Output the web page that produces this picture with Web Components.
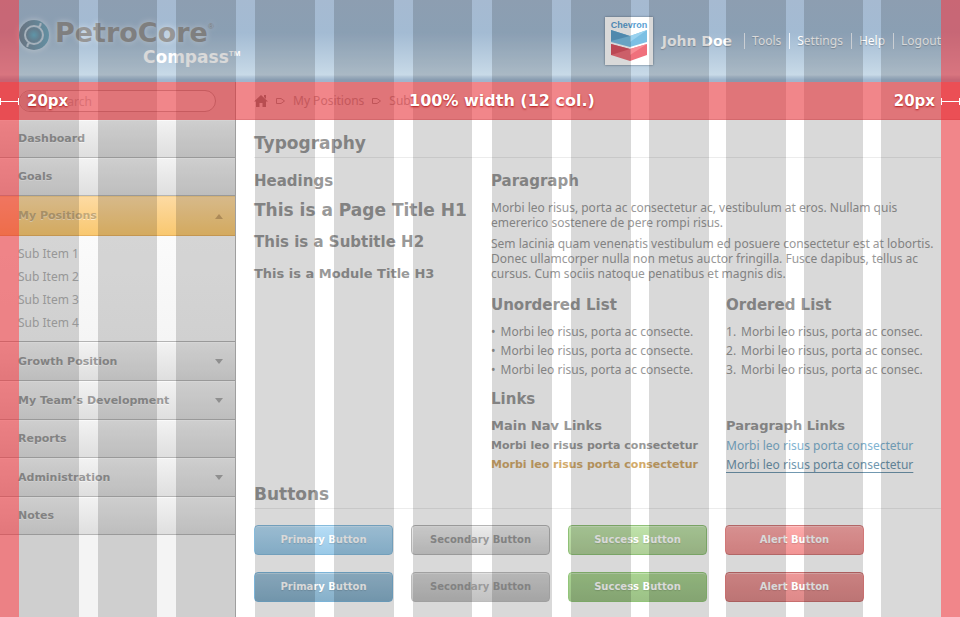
<!DOCTYPE html>
<html lang="en">
<head>
<meta charset="utf-8">
<title>PetroCore Compass – Style Guide</title>
<style>
html,body{margin:0;height:100%}
body{background:#fff;color:#999;font:12px/15px "Noto Sans","Open Sans",sans-serif;--display:"DejaVu Sans",Verdana,sans-serif}
</style>
</head>
<body>
<style-guide-page></style-guide-page>
<script>
function define(name, html, setup){
  const t=document.createElement('template');
  t.innerHTML=html;
  customElements.define(name, class extends HTMLElement{
    connectedCallback(){
      if(this.shadowRoot) return;
      this.attachShadow({mode:'open'}).append(t.content.cloneNode(true));
      if(setup) setup(this, this.shadowRoot);
    }
  });
}

define('brand-logo', `
<style>
:host{display:flex;align-items:center;color:#969696;padding-top:4px}
svg{width:30px;height:30px;margin:0 6px 16px 0;flex:none;filter:drop-shadow(0 0 3px #fff9)}
.words{display:flex;flex-direction:column;font-family:var(--display);font-weight:bold}
.name{font-size:27px;line-height:28px;text-shadow:0 0 6px #fff9;display:flex}
.sub{font-size:17px;line-height:20px;color:#fff;margin-left:88px;display:flex}
small{font:bold 8px/8px "Liberation Sans",sans-serif}
.name small{font-weight:normal;margin-top:4px}
.sub small{margin-top:3px}
</style>
<svg viewBox="0 0 30 30" aria-hidden="true">
 <defs><linearGradient id="g" x1="0" x2="1"><stop offset="0" stop-color="#7b8797"/><stop offset="1" stop-color="#75a9bf"/></linearGradient>
 <radialGradient id="c"><stop offset="0" stop-color="#6fb0c6"/><stop offset="1" stop-color="#7890a2"/></radialGradient></defs>
 <circle cx="15" cy="15" r="15" fill="url(#g)"/>
 <circle cx="15" cy="15" r="9" fill="none" stroke="#c3d0dc" stroke-width="2"/>
 <path d="M19.500 7Q22 6 21.500 3M10.500 23Q8 24 8.500 27" fill="none" stroke="#c3d0dc" stroke-width="2"/>
 <circle cx="15" cy="15" r="7" fill="url(#c)"/>
</svg>
<div class="words"><span class="name">PetroCore<small>®</small></span><span class="sub">Compass<small>TM</small></span></div>`);

define('company-badge', `
<style>
:host{display:block;width:48px;height:48px;box-sizing:border-box;background:#fff;box-shadow:0 0 2px #5a6a7a}
svg{display:block;width:48px;height:48px}
text{font:bold 9px "Liberation Sans",sans-serif;fill:#5b9fd2}
</style>
<svg viewBox="0 0 48 48" role="img" aria-label="Chevron">
 <text x="24" y="11" text-anchor="middle">Chevron</text>
 <path d="M6 13L25 19L42 13V25L25 30L6 25Z" fill="#7cc0e4"/>
 <path d="M6 13L25 19L6 24Z" fill="#5fa2cc"/><path d="M25 19L42 13L25 25Z" fill="#9ad2ef"/>
 <path d="M6 27L25 32L42 27V38L25 44L6 38Z" fill="#f0707c"/>
 <path d="M6 27L25 32L6 38Z" fill="#dc5563"/><path d="M25 32L42 27L25 38Z" fill="#f88c94"/>
</svg>`);

define('app-header', `
<style>
:host{display:flex;align-items:center;justify-content:space-between;height:82px;padding:0 19px;
 background:linear-gradient(#a6bad1,#a3bbd3 40%,#c8dae8 75px,#bccfdf 76px,#9fb6cf 80px,#a0b6cd)}
nav{display:flex;align-items:center;color:#fff}
strong{font:bold 14px/16px var(--display);margin:0 12px 0 9px;text-shadow:0 1px 1px #0003}
a{color:inherit;text-decoration:none;padding:0 8px 0 7px;border-left:1px solid #eef3f8;line-height:16px;text-shadow:0 1px 1px #0003}
a:last-child{padding-right:0}
</style>
<brand-logo></brand-logo>
<nav aria-label="Account"><company-badge></company-badge><strong>John Doe</strong>
<a href="#tools">Tools</a><a href="#settings">Settings</a><a href="#help">Help</a><a href="#logout">Logout</a></nav>`);

define('search-box', `
<style>
:host{display:flex;align-items:center;height:38px;padding:0 19px;box-sizing:border-box}
label{display:flex;align-items:center;flex:1;min-width:0;height:22px;border:1px solid #bbb;border-radius:12px;background:#fff;box-sizing:border-box;overflow:hidden}
svg{width:26px;height:20px;flex:none;background:#ddd}
input{flex:1;width:0;min-width:0;border:0;background:none;outline:0;font:inherit;color:#bbb;padding:0 8px;margin:0}
input::placeholder{color:#ccc;opacity:1}
</style>
<label><svg viewBox="0 0 26 20" aria-hidden="true"><circle cx="13" cy="9" r="4" fill="none" stroke="#ddd" stroke-width="2"/></svg><input type="search" placeholder="Search" aria-label="Search"></label>`);

define('nav-item', `
<style>
:host{display:block}
a{display:flex;align-items:center;justify-content:space-between;height:38px;box-sizing:border-box;padding:0 12px 0 18px;
 font:bold 11px/16px var(--display);color:#999;text-decoration:none;text-shadow:0 1px 0 #fff8;
 background:linear-gradient(#f2f2f2,#dfdfdf);border-top:1px solid #fafafa;border-bottom:1px solid #b4b4b4}
:host([menu]) a{height:39px}
:host([open]) a{height:40px;color:#c4a878;background:linear-gradient(#fddaa2,#f9c870);border-color:#f5cf8c #e6b160 #e6b160}
svg{display:none;width:8px;height:5px;fill:#a8a8a8}
:host([menu]) svg,:host([open]) svg{display:block}
:host([open]) svg{transform:rotate(180deg);fill:#cba368}
</style>
<a href="#"><slot></slot><svg viewBox="0 0 8 5" aria-hidden="true"><path d="M0 0H8L4 5Z"/></svg></a>`);

define('sub-nav', `
<style>
:host{display:block;padding:6px 18px 7px;background:linear-gradient(#fbfbfb,#f5f5f5);border-bottom:1px solid #b4b4b4}
::slotted(a){display:block;line-height:23px;color:#b2b2b2;text-decoration:none}
</style><slot></slot>`);

define('side-nav', `
<style>
:host{display:block;flex:0 0 236px;min-width:0;box-sizing:border-box;border-right:1px solid #bbb;background:#f4f4f4}
</style>
<search-box></search-box>
<nav aria-label="Main">
<nav-item>Dashboard</nav-item><nav-item>Goals</nav-item><nav-item open>My Positions</nav-item>
<sub-nav><a href="#1">Sub Item 1</a><a href="#2">Sub Item 2</a><a href="#3">Sub Item 3</a><a href="#4">Sub Item 4</a></sub-nav>
<nav-item menu>Growth Position</nav-item><nav-item menu>My Team’s Development</nav-item><nav-item>Reports</nav-item><nav-item menu>Administration</nav-item><nav-item>Notes</nav-item>
</nav>`);

define('bread-crumbs', `
<style>
:host{display:flex;align-items:center;gap:8px;height:38px;padding-left:18px;box-sizing:border-box;background:#fff;border-bottom:1px solid #ddd}
a,span{color:#b4b4b4;text-decoration:none}
.home{width:14px;height:12px;display:block;fill:#999}
.sep{width:9px;height:6px;fill:none;stroke:#aaa}
</style>
<a href="#home" aria-label="Home"><svg class="home" viewBox="0 0 14 12"><path d="M7 0L14 6.500H12V12H8.500V8H5.500V12H2V6.500H0ZM10 0H12V4L10 2Z"/></svg></a>
<svg class="sep" viewBox="0 0 9 6"><path d="M.5.5H5L8.500 3L5 5.500H.5Z"/></svg>
<a href="#positions">My Positions</a>
<svg class="sep" viewBox="0 0 9 6"><path d="M.5.5H5L8.500 3L5 5.500H.5Z"/></svg>
<span>Sub</span>`);

define('section-title', `
<style>
:host{display:block;border-bottom:1px solid #ececec;padding-bottom:4px}
h1{margin:0;font:bold 17px/20px var(--display)}
</style><h1><slot></slot></h1>`);

define('ui-button', `
<style>
:host{display:block;width:139px}
button{display:block;width:100%;height:30px;padding:0;border:1px solid var(--b);border-radius:4px;color:#fff;
 font:bold 10px/16px var(--display);background:linear-gradient(var(--t),var(--e));box-shadow:inset 0 1px 0 #fff5;text-shadow:0 1px 1px #0002}
:host([kind=primary]){--t:#b6ddf6;--e:#9ac9e7;--b:#86bbdc}
:host([kind=primary][active]){--t:#9fc3da;--e:#86b0ca;--b:#7cb4d8}
:host([kind=secondary]){--t:#ebebeb;--e:#d3d3d3;--b:#b4b4b4}
:host([kind=secondary][active]){--t:#d6d6d6;--e:#c2c2c2;--b:#bcbcbc}
:host([kind=secondary]) button{color:#999;text-shadow:none}
:host([kind=success]){--t:#bfe3aa;--e:#b0cf99;--b:#8fc077}
:host([kind=success][active]){--t:#a9d391;--e:#9cc187;--b:#92c57a}
:host([kind=alert]){--t:#fdaaaa;--e:#f29595;--b:#d27878}
:host([kind=alert][active]){--t:#ee9898;--e:#de8989;--b:#c86f6f}
</style><button type="button"><slot></slot></button>`);

define('type-specimens', `
<style>
:host{display:grid;grid-template-columns:217fr 450fr;column-gap:20px;padding:13px 0 10px}
h1,h2,h3,p,ul,ol{margin:0;padding:0}
h1,h2,h3{font-family:var(--display);font-weight:bold;line-height:20px}
h1{font-size:17px}h2{font-size:15px}h3{font-size:13px}
.heads{display:flex;flex-direction:column;gap:12px}
.label{margin-bottom:9px}
.heads .label{margin-bottom:-3px}
p{margin-bottom:6px}
.pair{display:grid;grid-template-columns:1fr 1fr;column-gap:20px}
.lists{padding:8px 0 10px}
.lists h2,.links{margin-bottom:7px}
ul,ol{list-style:none;counter-reset:n}
li{display:flex;gap:5px;line-height:19px;counter-increment:n}
ul li::before{content:"•"}
ol li::before{content:counter(n) "."}
.pair a{display:block;line-height:19px;text-decoration:none}
.main{font:bold 11px/19px var(--display);color:#999}
.main.hot{color:#d2aa6c}
.para{color:#82b4d2}
.pair .para.hot{color:#7198b0;text-decoration:underline;text-underline-offset:3px}
</style>
<div class="heads"><h2 class="label">Headings</h2><h1>This is a Page Title H1</h1><h2>This is a Subtitle H2</h2><h3>This is a Module Title H3</h3></div>
<div><h2 class="label">Paragraph</h2>
<p>Morbi leo risus, porta ac consectetur ac, vestibulum at eros. Nullam quis emererico sostenere de pere rompi risus.</p>
<p>Sem lacinia quam venenatis vestibulum ed posuere consectetur est at lobortis. Donec ullamcorper nulla non metus auctor fringilla. Fusce dapibus, tellus ac cursus. Cum sociis natoque penatibus et magnis dis.</p>
<div class="pair lists"><div><h2>Unordered List</h2><ul><li>Morbi leo risus, porta ac consecte.</li><li>Morbi leo risus, porta ac consecte.</li><li>Morbi leo risus, porta ac consecte.</li></ul></div>
<div><h2>Ordered List</h2><ol><li>Morbi leo risus, porta ac consec.</li><li>Morbi leo risus, porta ac consec.</li><li>Morbi leo risus, porta ac consec.</li></ol></div></div>
<h2 class="links">Links</h2>
<div class="pair"><div><h3>Main Nav Links</h3><a class="main" href="#a">Morbi leo risus porta consectetur</a><a class="main hot" href="#b">Morbi leo risus porta consectetur</a></div>
<div><h3>Paragraph Links</h3><a class="para" href="#c">Morbi leo risus porta consectetur</a><a class="para hot" href="#d">Morbi leo risus porta consectetur</a></div></div>
</div>`);

define('button-gallery', `
<style>:host{display:grid;grid-template-columns:repeat(4,139px);gap:17px 18px;padding:16px 0}</style>
<ui-button kind="primary">Primary Button</ui-button><ui-button kind="secondary">Secondary Button</ui-button><ui-button kind="success">Success Button</ui-button><ui-button kind="alert">Alert Button</ui-button>
<ui-button kind="primary" active>Primary Button</ui-button><ui-button kind="secondary" active>Secondary Button</ui-button><ui-button kind="success" active>Success Button</ui-button><ui-button kind="alert" active>Alert Button</ui-button>`);

/* Twelve-column layout guide drawn over the whole page. */
define('grid-guides', `
<style>
:host{position:absolute;inset:0;pointer-events:none;overflow:hidden}
.cols,.rails,.band{position:absolute;inset:0}
.cols{padding:0 19px;display:grid;grid-template-columns:60fr 19fr 59fr 19fr 60fr 19fr 60fr 19fr 60fr 19fr 59fr 20fr 60fr 19fr 60fr 18fr 60fr 17fr 60fr 18fr 59fr 18fr 60fr}
.cols i:nth-child(odd){background:#00000026}
.rails{border:solid #e5232a8c;border-width:0 19px}
.band{top:82px;bottom:auto;height:38px;background:#e5232a8c;display:grid;grid-template-columns:410fr auto 366fr;align-items:center;
 color:#fff;font:bold 16px/20px var(--display);text-shadow:0 1px 2px #a00c}
.edge{display:flex;align-items:center;gap:8px;font-size:15px}
.edge:last-child{justify-content:flex-end}
.edge i{width:19px;height:7px;box-sizing:border-box;border:solid #fff;border-width:0 1px;background:linear-gradient(#fff,#fff) 0 3px/100% 1px no-repeat}
.edge:last-child{gap:6px}
</style>
<div class="cols"></div><div class="rails"></div>
<div class="band"><span class="edge"><i></i>20px</span><span class="mid">100% width (12 col.)</span><span class="edge">20px<i></i></span></div>`,
(host,root)=>{const c=root.querySelector('.cols');for(let n=0;n<23;n++)c.append(document.createElement('i'));});

define('style-guide-page', `
<style>
:host{display:flex;flex-direction:column;position:relative;min-height:100%}
.body{display:flex;flex:1}
main{flex:1;min-width:0}
.content{padding:13px 19px 0 18px}
</style>
<app-header></app-header>
<div class="body"><side-nav></side-nav>
<main><bread-crumbs></bread-crumbs><div class="content">
<section-title>Typography</section-title><type-specimens></type-specimens>
<section-title>Buttons</section-title><button-gallery></button-gallery>
</div></main></div>
<grid-guides></grid-guides>`);
</script>
</body>
</html>
